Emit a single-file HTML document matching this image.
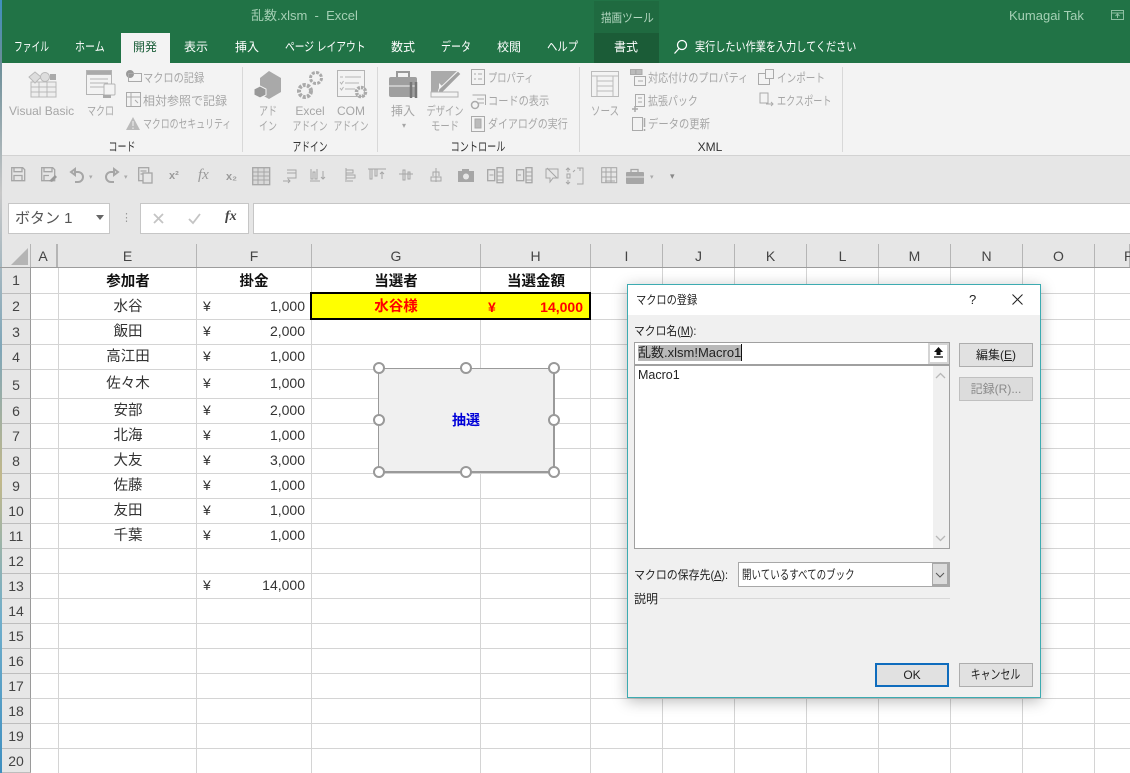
<!DOCTYPE html>
<html lang="ja"><head><meta charset="utf-8"><title>乱数.xlsm - Excel</title>
<style>
html,body{margin:0;padding:0;width:1130px;height:773px;overflow:hidden;background:#fff}
body{position:relative;font-family:"Liberation Sans","Noto Sans CJK JP",sans-serif;font-size:12px;color:#222}
.a{position:absolute}
.t{position:absolute;white-space:nowrap;line-height:16px;transform-origin:0 0}
.c{transform:translateX(-50%);text-align:center;transform-origin:center}
.r{transform:translateX(-100%)}
.tab{color:#fff;font-size:12.5px;top:39px}
.g{color:#a6a6a6;font-size:12px}
.gl{color:#333;font-size:12.5px;top:139px}
.hl{position:absolute;left:31px;width:1099px;height:1px;background:#d4d4d4}
.vl{position:absolute;top:268px;width:1px;height:505px;background:#d4d4d4}
.hd{position:absolute;top:244px;height:24px;background:#e6e6e6;border-right:1px solid #b5b5b5;box-sizing:border-box;text-align:center;line-height:24px;font-size:14px;color:#444}
.rh{position:absolute;left:2px;width:29px;background:#e6e6e6;border-bottom:1px solid #bdbdbd;border-right:1px solid #9a9a9a;box-sizing:border-box;text-align:center;font-size:14px;color:#444}
.cell{position:absolute;font-size:14px;color:#333;white-space:nowrap;line-height:20px}
.n{font-size:14.5px;margin-top:1px}
.b{font-weight:bold;color:#111;font-size:14.5px;margin-top:1px}
.btn{position:absolute;width:74px;height:24px;box-sizing:border-box;background:#e1e1e1;border:1px solid #adadad;text-align:center;line-height:22px;font-size:12px;color:#222}
.h{position:absolute;width:12px;height:12px;border-radius:50%;background:#fff;border:2px solid #999;box-sizing:border-box}
svg{position:absolute;overflow:visible}
</style></head><body>

<!-- title bar -->
<div class="a" style="left:0;top:0;width:1130px;height:63px;background:#217346"></div>
<div class="a" style="left:594px;top:1px;width:65px;height:62px;background:#1f6a40"></div>
<div class="a" style="left:594px;top:33px;width:65px;height:30px;background:#1b5c37"></div>
<div class="t" style="left:251px;top:8px;color:#a5d0b5;font-size:13px">乱数.xlsm&nbsp; -&nbsp; Excel</div>
<div class="t" style="left:601px;top:10px;color:#b5d8c2;font-size:12px;transform:scaleX(.88)">描画ツール</div>
<div class="t" style="left:1009px;top:8px;color:#a5d0b5;font-size:13px">Kumagai Tak</div>
<svg style="left:1111px;top:10px" width="13" height="11"><rect x=".5" y=".5" width="12" height="9" fill="none" stroke="#8fc0a3"/><path d="M.5 3h12M6.5 8V4M4.5 6l2-2 2 2" fill="none" stroke="#8fc0a3"/></svg>

<div class="a" style="left:121px;top:33px;width:49px;height:30px;background:#f3f3f3"></div>
<div class="t tab" style="left:14px;transform:scaleX(.7)">ファイル</div>
<div class="t tab" style="left:75px;transform:scaleX(.8)">ホーム</div>
<div class="t tab" style="left:133px;color:#1c5f3a;font-size:12px">開発</div>
<div class="t tab" style="left:184px;font-size:12px">表示</div>
<div class="t tab" style="left:235px;font-size:12px">挿入</div>
<div class="t tab" style="left:285px;transform:scaleX(.78)">ページ レイアウト</div>
<div class="t tab" style="left:391px;font-size:12px">数式</div>
<div class="t tab" style="left:441px;transform:scaleX(.8)">データ</div>
<div class="t tab" style="left:497px;font-size:12px">校閲</div>
<div class="t tab" style="left:547px;transform:scaleX(.83)">ヘルプ</div>
<div class="t tab" style="left:614px;font-size:12px">書式</div>
<svg style="left:673px;top:39px" width="16" height="16" fill="none" stroke="#fff" stroke-width="1.3"><circle cx="9" cy="6" r="4.5"/><path d="M6 9.5L1.5 14.5"/></svg>
<div class="t tab" style="left:695px;transform:scaleX(.81)">実行したい作業を入力してください</div>

<!-- ribbon -->
<div class="a" style="left:0;top:63px;width:1130px;height:92px;background:#f3f3f3;border-bottom:1px solid #d2d2d2"></div>
<div class="a" style="left:242px;top:67px;width:1px;height:85px;background:#d8d8d8"></div>
<div class="a" style="left:377px;top:67px;width:1px;height:85px;background:#d8d8d8"></div>
<div class="a" style="left:579px;top:67px;width:1px;height:85px;background:#d8d8d8"></div>
<div class="a" style="left:842px;top:67px;width:1px;height:85px;background:#d8d8d8"></div>

<!-- ribbon big icons -->
<svg style="left:26px;top:70px" width="32" height="28" fill="none" stroke="#b9b9b9"><rect x="5" y="12" width="25" height="15" fill="#eee"/><path d="M5 17h25M5 22h25M13 12v15M21 12v15"/><path d="M9 2l6 5-6 6-6-6z" fill="#ddd"/><circle cx="19" cy="7" r="4.5" fill="#ddd"/><rect x="24" y="4" width="6" height="6" fill="#aaa" stroke="none"/></svg>
<svg style="left:86px;top:70px" width="32" height="30" fill="none" stroke="#b4b4b4"><rect x=".5" y=".5" width="25" height="24" fill="#f3f3f3"/><rect x=".5" y=".5" width="25" height="4" fill="#aaa"/><path d="M4 9h18M4 13h18M4 17h14"/><rect x="18" y="14" width="11" height="11" rx="1" fill="#f3f3f3"/><rect x="17" y="25" width="8" height="3" fill="#aaa" stroke="none"/></svg>
<svg style="left:125px;top:69px" width="17" height="64" fill="none" stroke="#aaa"><circle cx="5" cy="5" r="4" fill="#999" stroke="none"/><rect x="3.5" y="4.5" width="13" height="8"/><rect x="1.5" y="23.5" width="14" height="14"/><path d="M1.5 28h14M6 23.5v14M10 31l3 3"/><path d="M8 48l7 13H1z" fill="#bbb" stroke="none"/><path d="M8 52v5M8 58.5v1.500" stroke="#f3f3f3"/></svg>
<svg style="left:254px;top:71px" width="28" height="28"><path d="M15 0l12 7v14l-12 7-9-5V7z" fill="#a9a9a9"/><path d="M6 15l6 3v6l-6 3-6-3v-6z" fill="#989898" stroke="#f3f3f3"/></svg>
<svg style="left:296px;top:70px" width="28" height="30"><circle cx="20" cy="8" r="5.5" fill="none" stroke="#aaa" stroke-width="3" stroke-dasharray="3 1.3"/><circle cx="9" cy="21" r="6" fill="none" stroke="#aaa" stroke-width="4" stroke-dasharray="3 1.3"/></svg>
<svg style="left:337px;top:70px" width="32" height="30" fill="none" stroke="#b4b4b4"><rect x=".5" y=".5" width="27" height="26" fill="#f3f3f3"/><path d="M8 7h16M8 13h14M8 19h10M3 7h3M3 12l1.5 2 2-3M3 18l1.5 2 2-3"/><circle cx="24" cy="22" r="4.5" stroke="#aaa" stroke-width="3.5" stroke-dasharray="2.5 1"/></svg>
<svg style="left:389px;top:71px" width="30" height="30"><rect x="8" y="1" width="12" height="6" fill="none" stroke="#999" stroke-width="2"/><rect x="0" y="6" width="28" height="20" rx="2" fill="#9f9f9f"/><path d="M0 15h28" stroke="#f3f3f3"/><path d="M22 11v16M27 11v16" stroke="#777" stroke-width="2.5"/></svg>
<svg style="left:430px;top:69px" width="32" height="30"><path d="M1 2l26 0-13 13 0 11-13 0z" fill="#aaa"/><path d="M9 14l3 3-3 3z" fill="#f3f3f3"/><path d="M9 20L28 2l3 3-18 18-5 1z" fill="#a2a2a2" stroke="#f3f3f3"/><rect x="1" y="23" width="27" height="5" fill="#f3f3f3" stroke="#b0b0b0"/></svg>
<svg style="left:471px;top:69px" width="17" height="64" fill="none" stroke="#aaa"><rect x=".5" y=".5" width="13" height="15"/><path d="M3 5h2M7 5h4M3 10h2M7 10h4"/><circle cx="4" cy="36" r="3.5" stroke-width="1.5"/><path d="M1.5 26h13v10M6 30h7M6 34h7" /><rect x=".5" y="47.5" width="13" height="15"/><rect x="4" y="50" width="6" height="9" fill="#bbb"/></svg>
<svg style="left:591px;top:71px" width="28" height="28" fill="none" stroke="#bbb"><rect x=".5" y=".5" width="27" height="25"/><path d="M.5 5h27M6 5v20M6 10h16M6 15h16M6 20h16M22 5v20" /></svg>
<svg style="left:630px;top:69px" width="18" height="64" fill="none" stroke="#aaa"><rect x=".5" y=".5" width="5" height="5" fill="#bbb"/><rect x="6" y=".5" width="6" height="5" fill="#bbb"/><rect x="4.5" y="7.5" width="11" height="9"/><path d="M8 12h5"/><path d="M2 40h6M5 37v6" stroke-width="1.5"/><rect x="5.5" y="25.5" width="9" height="12"/><path d="M8 29h4M8 33h4"/><rect x="2.5" y="48.5" width="10" height="13"/><path d="M14.5 49v9M14.5 60v2" stroke-width="1.5"/></svg>
<svg style="left:758px;top:69px" width="18" height="42" fill="none" stroke="#aaa"><rect x=".5" y="4.5" width="11" height="11"/><rect x="7.5" y=".5" width="8" height="9" fill="#f3f3f3"/><path d="M2 28v-4h8v10H2z"/><path d="M8 35h7m-2-2l2 2-2 2"/></svg>

<div class="t g" style="left:9px;top:103px">Visual Basic</div>
<div class="t g" style="left:87px;top:103px;transform:scaleX(.75)">マクロ</div>
<div class="t g" style="left:143px;top:70px;transform:scaleX(.85)">マクロの記録</div>
<div class="t g" style="left:143px;top:93px">相対参照で記録</div>
<div class="t g" style="left:143px;top:116px;transform:scaleX(.74)">マクロのセキュリティ</div>
<div class="t g c" style="left:268px;top:103px;transform:translateX(-50%) scaleX(.75)">アド</div>
<div class="t g c" style="left:268px;top:118px;transform:translateX(-50%) scaleX(.75)">イン</div>
<div class="t g c" style="left:310px;top:103px">Excel</div>
<div class="t g c" style="left:310px;top:118px;transform:translateX(-50%) scaleX(.73)">アドイン</div>
<div class="t g c" style="left:351px;top:103px">COM</div>
<div class="t g c" style="left:351px;top:118px;transform:translateX(-50%) scaleX(.73)">アドイン</div>
<div class="t g c" style="left:403px;top:103px">挿入</div>
<div class="t g c" style="left:404px;top:118px;font-size:8px">▾</div>
<div class="t g c" style="left:445px;top:103px;transform:translateX(-50%) scaleX(.77)">デザイン</div>
<div class="t g c" style="left:445px;top:118px;transform:translateX(-50%) scaleX(.78)">モード</div>
<div class="t g" style="left:488px;top:70px;transform:scaleX(.77)">プロパティ</div>
<div class="t g" style="left:488px;top:93px;transform:scaleX(.85)">コードの表示</div>
<div class="t g" style="left:488px;top:116px;transform:scaleX(.83)">ダイアログの実行</div>
<div class="t g c" style="left:605px;top:103px;transform:translateX(-50%) scaleX(.8)">ソース</div>
<div class="t g" style="left:648px;top:70px;transform:scaleX(.84)">対応付けのプロパティ</div>
<div class="t g" style="left:648px;top:93px;transform:scaleX(.83)">拡張パック</div>
<div class="t g" style="left:648px;top:116px;transform:scaleX(.86)">データの更新</div>
<div class="t g" style="left:777px;top:70px;transform:scaleX(.8)">インポート</div>
<div class="t g" style="left:777px;top:93px;transform:scaleX(.76)">エクスポート</div>
<div class="t gl c" style="left:122px;transform:translateX(-50%) scaleX(.72)">コード</div>
<div class="t gl c" style="left:310px;transform:translateX(-50%) scaleX(.7)">アドイン</div>
<div class="t gl c" style="left:478px;transform:translateX(-50%) scaleX(.73)">コントロール</div>
<div class="t gl c" style="left:710px;font-size:12px">XML</div>

<!-- QAT + formula band -->
<div class="a" style="left:0;top:156px;width:1130px;height:88px;background:#e6e6e6"></div>
<svg style="left:11px;top:167px" width="680" height="18" fill="none" stroke="#a6a6a6" stroke-width="1.3">
<path d="M.7.7h11l2 2v11H.7zM3 .7v4h8v-4M3 13.5v-5h8v5"/>
<path d="M30.7.7h11l2 2v11h-13zM33 .7v4h8v-4M33 13.5v-5h5"/><path d="M38 14l6-6 2 2-5 5z" fill="#999" stroke="none"/>
<path d="M60 5l4-3v6zM63 5h4a4.5 4.5 0 0 1 0 10h-3" stroke-width="2"/>
<path d="M107 5l-4-3v6zM104 5h-4a4.5 4.5 0 0 0 0 10h3" stroke-width="2"/>
<rect x="127.7" y=".7" width="10" height="13"/><rect x="132" y="6" width="9" height="10" fill="#e6e6e6"/><path d="M129.5 4h6M129.5 7h2"/>
<rect x="241.7" y=".7" width="17" height="17" fill="#d9d9d9"/><path d="M241.7 5h17M241.7 9h17M241.7 13h17M247 .7v17M253 .7v17" stroke-width="1"/>
<path d="M276 3h9v8h-9M276 6h9M272 14h7m-2-2l2 2-2 2" stroke-width="1"/>
<path d="M300 2v10h2V5h2v7h2V2M299 14h10M312 4v8m-2-2l2 2 2-2" stroke-width="1"/>
<path d="M335 1v14M335 3h7v3h-7M335 8h9v3h-9M342 14h-6" stroke-width="1"/>
<path d="M357 2h18M359 2v10h2V2M364 2v7h2V2M371 12V5m-2 2l2-2 2 2" stroke-width="1"/>
<path d="M388 7h14M392 3h2v10h-2zM397 5h2v7h-2z" stroke-width="1"/>
<path d="M425 1v14M420 14h10v-4h-10zM422 9V5h6v4" stroke-width="1"/>
<rect x="447" y="4" width="16" height="11" fill="#a6a6a6" stroke="none"/><circle cx="455" cy="9.5" r="3" fill="#e6e6e6" stroke="none"/><rect x="451" y="2" width="7" height="3" fill="#a6a6a6" stroke="none"/>
<rect x="476.7" y="2.7" width="7" height="11"/><rect x="486" y=".7" width="6" height="15"/><path d="M478.5 8h4M486 5h6M486 9h6M486 13h6" stroke-width="1"/>
<rect x="505.7" y="2.7" width="7" height="11"/><rect x="515" y=".7" width="6" height="15"/><path d="M507 8h3M515 5h6M515 9h6M515 13h6" stroke-width="1"/>
<path d="M535 2h12v9h-5l-3 4v-4h-4zM536 1l10 10" stroke-width="1"/>
<path d="M566 1h6v16h-6M569 4v-3M564 3l-2 2M557 1v4m-2-2l2-2 2 2M557 17v-4m-2 2l2 2 2-2M556 7h3v4h-3z" stroke-width="1"/>
<rect x="590.7" y=".7" width="15" height="15" stroke-width="1"/><path d="M590.7 5h15M590.7 10h15M595 .7v15M600 .7v15M594 14h10" stroke-width="1"/>
<rect x="615" y="5" width="18" height="12" rx="1" fill="#a6a6a6" stroke="none"/><path d="M620 5V2.5h7V5" /><path d="M615 10h18" stroke="#e6e6e6" stroke-width="1"/>
</svg>
<div class="t" style="left:89px;top:170px;color:#aaa;font-size:7px">▾</div>
<div class="t" style="left:124px;top:170px;color:#aaa;font-size:7px">▾</div>
<div class="t" style="left:650px;top:170px;color:#aaa;font-size:7px">▾</div>
<div class="t" style="left:670px;top:168px;color:#888;font-size:9px">▾</div>
<div class="t" style="left:169px;top:168px;color:#9a9a9a;font-size:11px;font-weight:bold">x²</div>
<div class="t" style="left:198px;top:167px;color:#9a9a9a;font-size:15px;font-style:italic;font-family:'Liberation Serif',serif">fx</div>
<div class="t" style="left:226px;top:169px;color:#9a9a9a;font-size:11px;font-weight:bold">x₂</div>

<!-- name box + formula bar -->
<div class="a" style="left:8px;top:203px;width:102px;height:31px;background:#fff;border:1px solid #c6c6c6;box-sizing:border-box"></div>
<div class="t" style="left:15px;top:211px;font-size:15px;color:#555">ボタン 1</div>
<div class="a" style="left:96px;top:215px;width:0;height:0;border-left:4px solid transparent;border-right:4px solid transparent;border-top:5px solid #666"></div>
<div class="t" style="left:121px;top:210px;color:#999;font-size:11px">⋮</div>
<div class="a" style="left:140px;top:203px;width:109px;height:31px;background:#fff;border:1px solid #c6c6c6;box-sizing:border-box"></div>
<svg style="left:153px;top:212px" width="50" height="14" fill="none" stroke="#c4c4c4" stroke-width="1.8"><path d="M1 2l9 9M10 2l-9 9M36 7l4 4 7-9"/></svg>
<div class="t" style="left:225px;top:209px;color:#444;font-size:14px;font-style:italic;font-weight:bold;font-family:'Liberation Serif',serif">fx</div>
<div class="a" style="left:253px;top:203px;width:877px;height:31px;background:#fff;border:1px solid #c6c6c6;box-sizing:border-box;border-right:0"></div>

<!-- left desktop sliver -->
<div class="a" style="left:0;top:0;width:2px;height:773px;background:linear-gradient(#3f8fc0 0,#6a8d98 8%,#c8c8c8 25%,#7fa6b8 45%,#c2b88a 62%,#70aecb 80%,#3f8fc0 100%)"></div>

<!-- grid lines -->
<div class="hl" style="top:293px"></div><div class="hl" style="top:319px"></div><div class="hl" style="top:344px"></div><div class="hl" style="top:369px"></div><div class="hl" style="top:398px"></div><div class="hl" style="top:423px"></div><div class="hl" style="top:448px"></div><div class="hl" style="top:473px"></div><div class="hl" style="top:498px"></div><div class="hl" style="top:523px"></div><div class="hl" style="top:548px"></div><div class="hl" style="top:573px"></div><div class="hl" style="top:598px"></div><div class="hl" style="top:623px"></div><div class="hl" style="top:648px"></div><div class="hl" style="top:673px"></div><div class="hl" style="top:698px"></div><div class="hl" style="top:723px"></div><div class="hl" style="top:748px"></div>
<div class="vl" style="left:58px"></div><div class="vl" style="left:196px"></div><div class="vl" style="left:311px"></div><div class="vl" style="left:480px"></div><div class="vl" style="left:590px"></div><div class="vl" style="left:662px"></div><div class="vl" style="left:734px"></div><div class="vl" style="left:806px"></div><div class="vl" style="left:878px"></div><div class="vl" style="left:950px"></div><div class="vl" style="left:1022px"></div><div class="vl" style="left:1094px"></div>

<!-- column headers -->
<div class="a" style="left:2px;top:244px;width:29px;height:24px;background:#e6e6e6;border-right:1px solid #b5b5b5;box-sizing:border-box"></div>
<div class="a" style="left:11px;top:248px;width:0;height:0;border-left:17px solid transparent;border-bottom:17px solid #b4b4b4"></div>
<div class="hd" style="left:31px;width:27px;padding-right:2px">A</div>
<div class="a" style="left:56px;top:244px;width:1px;height:24px;background:#b5b5b5"></div>
<div class="hd" style="left:58px;width:139px;padding-left:1px">E</div>
<div class="hd" style="left:197px;width:115px">F</div>
<div class="hd" style="left:312px;width:169px">G</div>
<div class="hd" style="left:481px;width:110px">H</div>
<div class="hd" style="left:591px;width:72px">I</div>
<div class="hd" style="left:663px;width:72px">J</div>
<div class="hd" style="left:735px;width:72px">K</div>
<div class="hd" style="left:807px;width:72px">L</div>
<div class="hd" style="left:879px;width:72px">M</div>
<div class="hd" style="left:951px;width:72px">N</div>
<div class="hd" style="left:1023px;width:72px">O</div>
<div class="hd" style="left:1095px;width:35px;text-align:left;padding-left:29px">P</div>
<div class="a" style="left:0;top:267px;width:1130px;height:1px;background:#9c9c9c"></div>

<!-- row headers -->
<div class="rh" style="top:268px;height:26px;line-height:25px">1</div>
<div class="rh" style="top:294px;height:26px;line-height:25px">2</div>
<div class="rh" style="top:320px;height:25px;line-height:24px">3</div>
<div class="rh" style="top:345px;height:25px;line-height:24px">4</div>
<div class="rh" style="top:370px;height:29px;line-height:30px">5</div>
<div class="rh" style="top:399px;height:25px;line-height:24px">6</div>
<div class="rh" style="top:424px;height:25px;line-height:24px">7</div>
<div class="rh" style="top:449px;height:25px;line-height:24px">8</div>
<div class="rh" style="top:474px;height:25px;line-height:24px">9</div>
<div class="rh" style="top:499px;height:25px;line-height:24px">10</div>
<div class="rh" style="top:524px;height:25px;line-height:24px">11</div>
<div class="rh" style="top:549px;height:25px;line-height:24px">12</div>
<div class="rh" style="top:574px;height:25px;line-height:24px">13</div>
<div class="rh" style="top:599px;height:25px;line-height:24px">14</div>
<div class="rh" style="top:624px;height:25px;line-height:24px">15</div>
<div class="rh" style="top:649px;height:25px;line-height:24px">16</div>
<div class="rh" style="top:674px;height:25px;line-height:24px">17</div>
<div class="rh" style="top:699px;height:25px;line-height:24px">18</div>
<div class="rh" style="top:724px;height:25px;line-height:24px">19</div>
<div class="rh" style="top:749px;height:24px;line-height:24px">20</div>

<!-- cells -->
<div class="cell b c" style="left:128px;top:271px">参加者</div>
<div class="cell b c" style="left:254px;top:271px">掛金</div>
<div class="cell b c" style="left:396px;top:271px">当選者</div>
<div class="cell b c" style="left:536px;top:271px">当選金額</div>

<div class="cell n c" style="left:128px;top:296px">水谷</div>
<div class="cell n c" style="left:128px;top:321px">飯田</div>
<div class="cell n c" style="left:128px;top:346px">高江田</div>
<div class="cell n c" style="left:128px;top:373px">佐々木</div>
<div class="cell n c" style="left:128px;top:400px">安部</div>
<div class="cell n c" style="left:128px;top:425px">北海</div>
<div class="cell n c" style="left:128px;top:450px">大友</div>
<div class="cell n c" style="left:128px;top:475px">佐藤</div>
<div class="cell n c" style="left:128px;top:500px">友田</div>
<div class="cell n c" style="left:128px;top:525px">千葉</div>

<div class="cell" style="left:203px;top:296px">¥</div><div class="cell r" style="left:305px;top:296px">1,000</div>
<div class="cell" style="left:203px;top:321px">¥</div><div class="cell r" style="left:305px;top:321px">2,000</div>
<div class="cell" style="left:203px;top:346px">¥</div><div class="cell r" style="left:305px;top:346px">1,000</div>
<div class="cell" style="left:203px;top:373px">¥</div><div class="cell r" style="left:305px;top:373px">1,000</div>
<div class="cell" style="left:203px;top:400px">¥</div><div class="cell r" style="left:305px;top:400px">2,000</div>
<div class="cell" style="left:203px;top:425px">¥</div><div class="cell r" style="left:305px;top:425px">1,000</div>
<div class="cell" style="left:203px;top:450px">¥</div><div class="cell r" style="left:305px;top:450px">3,000</div>
<div class="cell" style="left:203px;top:475px">¥</div><div class="cell r" style="left:305px;top:475px">1,000</div>
<div class="cell" style="left:203px;top:500px">¥</div><div class="cell r" style="left:305px;top:500px">1,000</div>
<div class="cell" style="left:203px;top:525px">¥</div><div class="cell r" style="left:305px;top:525px">1,000</div>
<div class="cell" style="left:203px;top:575px">¥</div><div class="cell r" style="left:305px;top:575px">14,000</div>

<!-- yellow result -->
<div class="a" style="left:310px;top:292px;width:281px;height:28px;box-sizing:border-box;background:#ff0;border:2px solid #000"></div>
<div class="cell c" style="left:396px;top:297px;color:#f00;font-weight:bold;font-size:14.5px">水谷様</div>
<div class="cell" style="left:488px;top:297px;color:#f00;font-weight:bold">¥</div>
<div class="cell r" style="left:583px;top:297px;color:#f00;font-weight:bold">14,000</div>

<!-- form button -->
<div class="a" style="left:378px;top:368px;width:177px;height:105px;box-sizing:border-box;background:#f0f0f0;border:1.5px solid #9a9a9a;border-bottom-width:2px;border-right-width:2px"></div>
<div class="cell c" style="left:466px;top:410px;color:#0000d8;font-weight:bold">抽選</div>
<div class="h" style="left:373px;top:362px"></div><div class="h" style="left:460px;top:362px"></div><div class="h" style="left:548px;top:362px"></div>
<div class="h" style="left:373px;top:414px"></div><div class="h" style="left:548px;top:414px"></div>
<div class="h" style="left:373px;top:466px"></div><div class="h" style="left:460px;top:466px"></div><div class="h" style="left:548px;top:466px"></div>

<!-- dialog -->
<div class="a" style="left:627px;top:284px;width:414px;height:414px;box-sizing:border-box;background:#f0f0f0;border:1px solid #3cabb1;box-shadow:0 3px 14px rgba(0,0,0,.28)"></div>
<div class="a" style="left:628px;top:285px;width:412px;height:30px;background:#fff"></div>
<div class="t" style="left:636px;top:292px;font-size:12px;color:#222;transform:scaleX(.85)">マクロの登録</div>
<div class="t" style="left:969px;top:292px;font-size:13px;color:#222">?</div>
<svg style="left:1012px;top:294px" width="11" height="11" fill="none" stroke="#222"><path d="M.5.5l10 10M10.5.5l-10 10"/></svg>
<div class="t" style="left:634px;top:323px;font-size:12px;color:#222;transform:scaleX(.9)">マクロ名(<u>M</u>):</div>

<div class="a" style="left:634px;top:342px;width:316px;height:23px;box-sizing:border-box;background:#fff;border:1px solid #a0a0a0"></div>
<div class="a" style="left:638px;top:345px;width:103px;height:16px;background:#b9b9b9"></div>
<div class="t" style="left:638px;top:345px;font-size:13px;color:#222">乱数.xlsm!Macro1</div>
<div class="a" style="left:741px;top:344px;width:1px;height:17px;background:#111"></div>
<div class="a" style="left:928px;top:343px;width:21px;height:21px;box-sizing:border-box;background:#fff;border:2px solid #d4d4d4"></div>
<svg style="left:933px;top:347px" width="11" height="11"><path d="M5.5 0L10 5H7.5v3h-4V5H1z" fill="#111"/><path d="M1 10h9" stroke="#111" stroke-width="1.3"/></svg>

<div class="a" style="left:634px;top:365px;width:316px;height:184px;box-sizing:border-box;background:#fff;border:1px solid #a0a0a0"></div>
<div class="t" style="left:638px;top:367px;font-size:12.5px;color:#222">Macro1</div>
<div class="a" style="left:933px;top:366px;width:16px;height:182px;background:#f0f0f0"></div>
<svg style="left:935px;top:372px" width="11" height="170" fill="none" stroke="#b8b8b8" stroke-width="1.3"><path d="M1 6l4.5-4.5L10 6M1 164l4.5 4.5L10 164"/></svg>

<div class="btn" style="left:959px;top:343px">編集(<u>E</u>)</div>
<div class="btn" style="left:959px;top:377px;color:#8a8a8a;background:#dcdcdc;border-color:#c0c0c0">記録(R)...</div>

<div class="t" style="left:634px;top:567px;font-size:12px;color:#222;transform:scaleX(.91)">マクロの保存先(<u>A</u>):</div>
<div class="a" style="left:738px;top:562px;width:212px;height:25px;box-sizing:border-box;background:#fff;border:1px solid #a8a8a8"></div>
<div class="t" style="left:742px;top:567px;font-size:12.5px;color:#222;transform:scaleX(.76)">開いているすべてのブック</div>
<div class="a" style="left:932px;top:563px;width:17px;height:23px;box-sizing:border-box;background:#dcdcdc;border:1px solid #a8a8a8;border-width:1px 2px 2px 1px"></div>
<svg style="left:935px;top:572px" width="11" height="6" fill="none" stroke="#555"><path d="M1 1l4 4 4-4"/></svg>

<div class="t" style="left:634px;top:591px;font-size:12px;color:#222">説明</div>
<div class="a" style="left:660px;top:598px;width:290px;height:1px;background:#d8d8d8"></div>

<div class="btn" style="left:875px;top:663px;border:2px solid #0f6cbd;line-height:21px">OK</div>
<div class="btn" style="left:959px;top:663px"><span style="display:inline-block;transform:scaleX(.76);font-size:13px">キャンセル</span></div>

</body></html>
